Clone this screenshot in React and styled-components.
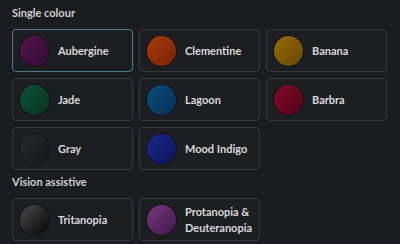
import React from 'react'
import styled, { createGlobalStyle } from 'styled-components'

const GlobalStyle = createGlobalStyle`
  html, body {
    margin: 0;
    padding: 0;
    background: #1b1c1f;
  }
  body {
    font-family: Lato, "Noto Sans", sans-serif;
  }
`

const Page = styled.div`
  width: 400px;
  height: 244px;
  box-sizing: border-box;
  padding: 5px 12px 0 12px;
  background: #1b1c1f;
  overflow: hidden;
`

const Heading = styled.h3`
  margin: ${({ $first }) => ($first ? '0 0 8px 0' : '4px 0 8px 0')};
  font-size: 11px;
  line-height: 16px;
  font-weight: 700;
  color: #cfd0d2;
`

const Grid = styled.div`
  display: grid;
  grid-template-columns: repeat(3, 121px);
  grid-auto-rows: 43px;
  gap: 6px;
`

const Card = styled.div`
  box-sizing: border-box;
  display: flex;
  align-items: center;
  gap: 9px;
  padding: 0 7px;
  border-radius: 4px;
  border: 1px solid ${({ $selected }) => ($selected ? '#4f7a8c' : '#37383c')};
  background: #1d1e21;
  cursor: pointer;
`

const Swatch = styled.div`
  flex: none;
  width: 29px;
  height: 30px;
  border-radius: 50%;
  background: linear-gradient(
    135deg,
    ${({ $from }) => $from} 0%,
    ${({ $to }) => $to} 100%
  );
  box-shadow: 0 0 0 1px rgba(0, 0, 0, 0.35);
`

const Label = styled.span`
  font-size: 11px;
  line-height: 16px;
  font-weight: 700;
  color: #d8d9db;
`

const singles = [
  { name: 'Aubergine', from: '#54164f', to: '#340a32', selected: true },
  { name: 'Clementine', from: '#a83c0c', to: '#7a2204' },
  { name: 'Banana', from: '#966c08', to: '#664602' },
  { name: 'Jade', from: '#0d5237', to: '#073322' },
  { name: 'Lagoon', from: '#0c4e7c', to: '#062f55' },
  { name: 'Barbra', from: '#820b2a', to: '#520318' },
  { name: 'Gray', from: '#2a2b2e', to: '#151618' },
  { name: 'Mood Indigo', from: '#182888', to: '#0c155c' },
]

const assistive = [
  { name: 'Tritanopia', from: '#4c4c4e', to: '#040404' },
  { name: 'Protanopia &\nDeuteranopia', from: '#763a7e', to: '#42164a' },
]

const ThemeCard = ({ theme }) => (
  <Card $selected={theme.selected}>
    <Swatch $from={theme.from} $to={theme.to} />
    <Label>
      {theme.name.split('\n').map((line, i) => (
        <React.Fragment key={i}>
          {i > 0 && <br />}
          {line}
        </React.Fragment>
      ))}
    </Label>
  </Card>
)

const App = () => (
  <Page>
    <GlobalStyle />
    <Heading $first>Single colour</Heading>
    <Grid>
      {singles.map(theme => (
        <ThemeCard key={theme.name} theme={theme} />
      ))}
    </Grid>
    <Heading>Vision assistive</Heading>
    <Grid>
      {assistive.map(theme => (
        <ThemeCard key={theme.name} theme={theme} />
      ))}
    </Grid>
  </Page>
)

export default App
